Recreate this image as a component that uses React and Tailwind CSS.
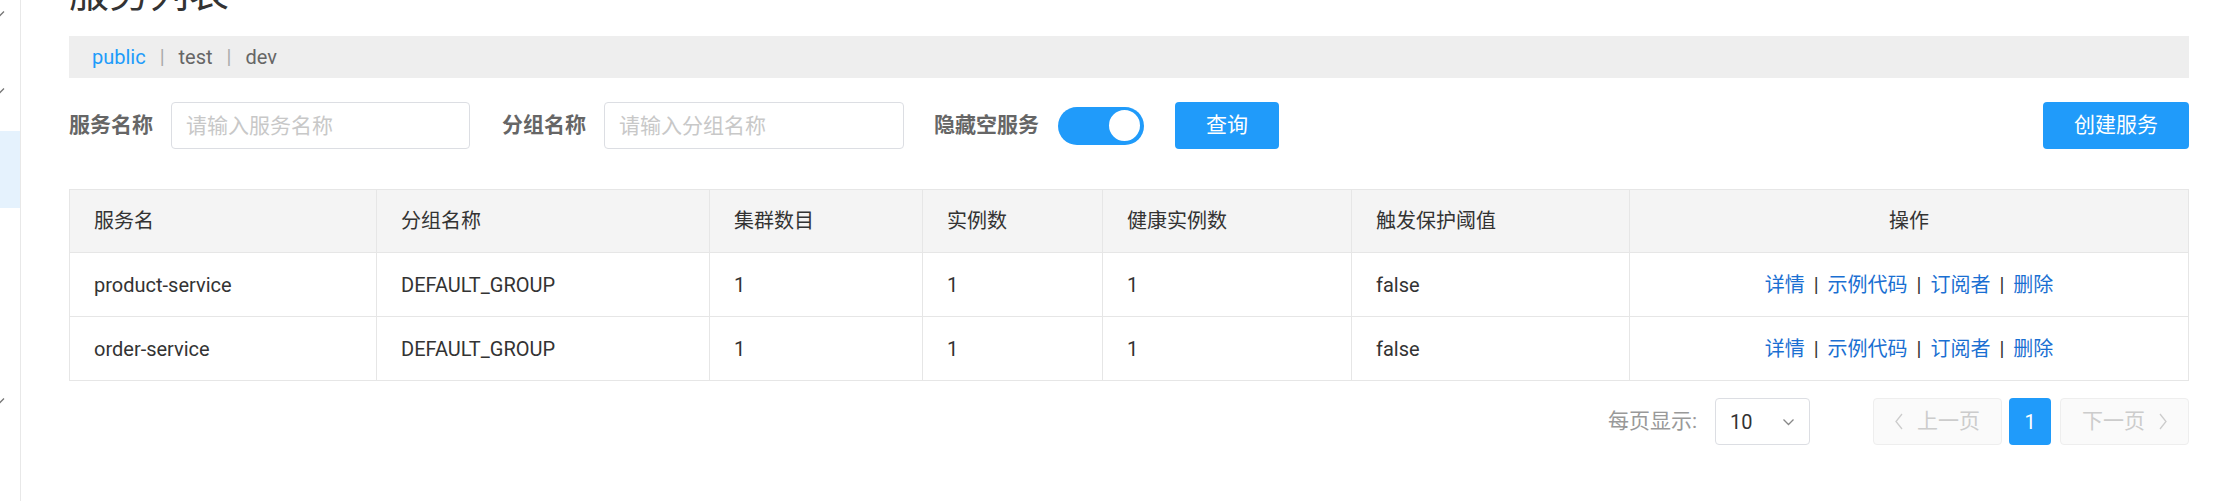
import React from 'react';

const COLS = [
  { label: '服务名', w: 'w-[307px]' },
  { label: '分组名称', w: 'w-[333px]' },
  { label: '集群数目', w: 'w-[213px]' },
  { label: '实例数', w: 'w-[180px]' },
  { label: '健康实例数', w: 'w-[249px]' },
  { label: '触发保护阈值', w: 'w-[278px]' },
  { label: '操作', w: 'w-[559px]' },
];

const ROWS = [
  { name: 'product-service', group: 'DEFAULT_GROUP', clusters: 1, count: 1, healthy: 1, threshold: 'false' },
  { name: 'order-service', group: 'DEFAULT_GROUP', clusters: 1, count: 1, healthy: 1, threshold: 'false' },
];

function Chevron({ dir = 'down', className = '' }) {
  const d = {
    down: 'M1 1.5l5 5 5-5',
    left: 'M7 1L1 8.5 7 16',
    right: 'M1 1l6 7.5L1 16',
  }[dir];
  const box = dir === 'down' ? '0 0 12 8' : '0 0 8 17';
  return (
    <svg viewBox={box} className={className} fill="none" stroke="currentColor" strokeWidth="1.3">
      <path d={d} />
    </svg>
  );
}

function Sidebar() {
  // only the right edge of the nav shows in the picture
  const items = ['chev', 'chev', 'active', '', '', 'chev'];
  return (
    <aside className="w-[21px] shrink-0 border-r border-[#e8e8e8] overflow-hidden">
      <div className="mt-[-25px]">
        {items.map((it, i) => (
          <div
            key={i}
            className={`h-[77px] flex items-center ${it === 'active' ? 'bg-[#e5f2fd] mt-[2px]' : ''}`}
          >
            {it === 'chev' && <Chevron className="w-[12px] h-[8px] ml-[-7px] text-[#777]" />}
          </div>
        ))}
      </div>
    </aside>
  );
}

const link = 'text-[#1a6fd2] cursor-pointer';

export default function App() {
  return (
    <div className="flex h-[501px] w-full overflow-hidden bg-white text-[20px] text-[#333] font-['Roboto','Noto_Sans_CJK_SC',sans-serif]">
      <Sidebar />

      <main className="flex-1 pl-[48px] pr-[35px]">
        <h1 className="mt-[-26px] h-[40px] leading-[40px] text-[40px] font-normal text-[#333]">服务列表</h1>

        {/* namespaces */}
        <div className="mt-[22px] h-[42px] bg-[#eeeeee] flex items-center pl-[23px] text-[20px]">
          <span className="text-[#209bfa]">public</span>
          <span className="mx-[14px] text-[#aaa]">|</span>
          <span className="text-[#666]">test</span>
          <span className="mx-[14px] text-[#aaa]">|</span>
          <span className="text-[#666]">dev</span>
        </div>

        {/* search */}
        <div className="mt-[24px] h-[47px] flex items-center text-[21px]">
          <label className="font-bold text-[#666] mr-[18px]">服务名称</label>
          <input
            placeholder="请输入服务名称"
            className="w-[299px] h-[47px] border border-[#dcdee3] rounded-[4px] px-[14px] text-[21px] placeholder:text-[#c8c8c8] outline-none"
          />
          <label className="font-bold text-[#666] ml-[32px] mr-[18px]">分组名称</label>
          <input
            placeholder="请输入分组名称"
            className="w-[300px] h-[47px] border border-[#dcdee3] rounded-[4px] px-[14px] text-[21px] placeholder:text-[#c8c8c8] outline-none"
          />
          <label className="font-bold text-[#666] ml-[30px] mr-[19px]">隐藏空服务</label>
          <button className="w-[86px] h-[38px] rounded-full bg-[#209bfa] flex items-center justify-end pr-[2px]">
            <span className="w-[35px] h-[35px] rounded-full bg-white border-2 border-[#209bfa]" />
          </button>
          <button className="ml-[31px] w-[104px] h-[47px] rounded-[4px] bg-[#209bfa] text-white">查询</button>
          <button className="ml-auto w-[146px] h-[47px] rounded-[4px] bg-[#209bfa] text-white">创建服务</button>
        </div>

        {/* table */}
        <table className="mt-[40px] w-full table-fixed border-collapse border border-[#e6e6e6]">
          <colgroup>
            {COLS.map(c => <col key={c.label} className={c.w} />)}
          </colgroup>
          <thead>
            <tr className="h-[63px] bg-[#f4f4f4]">
              {COLS.map((c, i) => (
                <th
                  key={c.label}
                  className={`border border-[#e6e6e6] px-[24px] font-normal text-[#333] ${i === COLS.length - 1 ? 'text-center' : 'text-left'}`}
                >
                  {c.label}
                </th>
              ))}
            </tr>
          </thead>
          <tbody>
            {ROWS.map(r => (
              <tr key={r.name} className="h-[64px]">
                <td className="border border-[#e6e6e6] px-[24px]">{r.name}</td>
                <td className="border border-[#e6e6e6] px-[24px]">{r.group}</td>
                <td className="border border-[#e6e6e6] px-[24px]">{r.clusters}</td>
                <td className="border border-[#e6e6e6] px-[24px]">{r.count}</td>
                <td className="border border-[#e6e6e6] px-[24px]">{r.healthy}</td>
                <td className="border border-[#e6e6e6] px-[24px]">{r.threshold}</td>
                <td className="border border-[#e6e6e6] px-[24px] text-center">
                  <a className={link}>详情</a>
                  <span className="mx-[9px]">|</span>
                  <a className={link}>示例代码</a>
                  <span className="mx-[9px]">|</span>
                  <a className={link}>订阅者</a>
                  <span className="mx-[9px]">|</span>
                  <a className={link}>删除</a>
                </td>
              </tr>
            ))}
          </tbody>
        </table>

        {/* pagination */}
        <div className="mt-[17px] h-[47px] flex items-center justify-end">
          <span className="text-[#999] text-[21px] mr-[18px]">每页显示:</span>
          <div className="w-[95px] h-[47px] border border-[#dcdee3] rounded-[4px] flex items-center justify-between pl-[14px] pr-[14px]">
            <span className="text-[#333]">10</span>
            <Chevron className="w-[13px] h-[8px] text-[#888]" />
          </div>
          <button className="ml-[63px] w-[129px] h-[47px] rounded-[4px] border border-[#eee] bg-[#fafafa] text-[#ccc] text-[21px] flex items-center justify-center gap-[14px]">
            <Chevron dir="left" className="w-[8px] h-[17px]" />
            <span>上一页</span>
          </button>
          <button className="ml-[7px] w-[42px] h-[47px] rounded-[4px] bg-[#209bfa] text-white">1</button>
          <button className="ml-[9px] w-[129px] h-[47px] rounded-[4px] border border-[#eee] bg-[#fafafa] text-[#ccc] text-[21px] flex items-center justify-center gap-[14px]">
            <span>下一页</span>
            <Chevron dir="right" className="w-[8px] h-[17px]" />
          </button>
        </div>
      </main>
    </div>
  );
}
